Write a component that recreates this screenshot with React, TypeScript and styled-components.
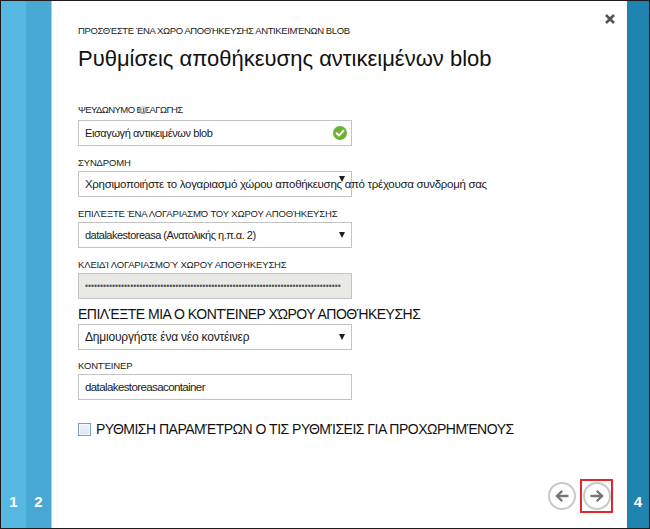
import React from "react";
import styled, { createGlobalStyle } from "styled-components";

const Global = createGlobalStyle`
  html, body { margin: 0; padding: 0; background: #ffffff; }
  body { font-family: "Liberation Sans", Arial, sans-serif; }
  * { box-sizing: border-box; }
`;

const Frame = styled.div`
  width: 650px;
  height: 529px;
  border: 1px solid #1b1b1b;
  display: flex;
  overflow: hidden;
`;

const tones: Record<string, string> = {
  light: "#56b8e1",
  mid: "#47a8d3",
  dark: "#1f84b0",
};

const StepCol = styled.div<{ $tone: string; $w: number }>`
  width: ${(p) => p.$w}px;
  flex: none;
  background: ${(p) => tones[p.$tone]};
  display: flex;
  flex-direction: column;
  justify-content: flex-end;
  align-items: center;
  padding-bottom: 18px;
  color: #ffffff;
  font-family: "Liberation Sans", Arial, sans-serif;
  font-weight: bold;
  font-size: 15px;
`;

const Divider = styled.div`
  width: 1px;
  flex: none;
  background: #9bd6ee;
`;

const Panel = styled.div`
  flex: 1;
  position: relative;
  background: #ffffff;
  display: flex;
  flex-direction: column;
  padding: 24px 14px 15px 26px;
`;

const Close = styled.button`
  position: absolute;
  top: 12px;
  right: 11px;
  width: 12px;
  height: 12px;
  padding: 0;
  border: none;
  background: none;
  display: flex;
`;

const Subtitle = styled.div`
  font-size: 9.5px;
  line-height: 12px;
  color: #222;
  letter-spacing: -0.4px;
`;

const Title = styled.h1`
  margin: 8px 0 0;
  font-weight: normal;
  font-size: 22px;
  line-height: 28px;
  color: #111;
`;

const Form = styled.div`
  display: flex;
  flex-direction: column;
  width: 274px;
  margin-top: 31px;
`;

const Field = styled.div<{ $top: number }>`
  display: flex;
  flex-direction: column;
  margin-top: ${(p) => p.$top}px;
`;

const Label = styled.div<{ $gap?: number; $ls?: number }>`
  position: relative;
  font-size: 9.5px;
  line-height: 12px;
  color: #222;
  letter-spacing: ${(p) => p.$ls ?? -0.15}px;
  margin-bottom: ${(p) => p.$gap ?? 2}px;
  white-space: nowrap;
`;

const Heading = styled.div`
  font-size: 14px;
  line-height: 16px;
  color: #111;
  letter-spacing: -0.5px;
  margin-bottom: 2px;
  white-space: nowrap;
`;

const Spinner = styled.span`
  position: absolute;
  left: 61px;
  top: 2px;
  width: 8px;
  height: 8px;
  border-radius: 50%;
  border: 2px solid #a0a0a0;
  border-top-color: #d6d6d6;
`;

const Box = styled.div<{ $disabled?: boolean }>`
  position: relative;
  height: 26px;
  border: 1px solid #c3c3c3;
  background: ${(p) => (p.$disabled ? "#e9e9e6" : "#ffffff")};
  display: flex;
  align-items: center;
  padding: 0 6px;
  color: #1a1a1a;
  white-space: nowrap;
`;

const BoxText = styled.span<{ $size?: number; $ls?: number }>`
  font-size: ${(p) => p.$size ?? 12}px;
  letter-spacing: ${(p) => p.$ls ?? -0.2}px;
`;

const Arrow = styled.span<{ $top?: number }>`
  position: absolute;
  right: 6px;
  top: ${(p) => p.$top ?? 9}px;
  width: 0;
  height: 0;
  border-left: 3.5px solid transparent;
  border-right: 3.5px solid transparent;
  border-top: 6px solid #1e1e1e;
`;

const Check = styled.span`
  position: absolute;
  right: 4px;
  top: 5px;
  display: flex;
`;

const Dots = styled.span`
  font-size: 8.6px;
  color: #555;
`;

const CheckRow = styled.label`
  display: flex;
  align-items: center;
  gap: 5px;
  margin-top: 21px;
  font-size: 14px;
  color: #111;
  letter-spacing: -0.5px;
  white-space: nowrap;
`;

const CheckBox = styled.span`
  width: 13px;
  height: 13px;
  border: 1px solid #7a9ecb;
  background: linear-gradient(#eef3fa, #dbe5f2);
  box-shadow: inset 0 0 0 1px #f7f9fc;
  flex: none;
`;

const Footer = styled.div`
  margin-top: auto;
  display: flex;
  justify-content: flex-end;
  align-items: center;
  gap: 2px;
`;

const NavFrame = styled.div<{ $active?: boolean }>`
  width: 33px;
  height: 34px;
  border: 2px solid ${(p) => (p.$active ? "#e2282c" : "transparent")};
  display: flex;
  align-items: center;
  justify-content: center;
`;

const NavCircle = styled.button`
  width: 28px;
  height: 28px;
  border-radius: 50%;
  border: 2px solid #c9c9c9;
  background: #ffffff;
  padding: 0;
  display: flex;
  align-items: center;
  justify-content: center;
`;

const ArrowIcon = ({ dir }: { dir: "left" | "right" }) => (
  <svg width="14" height="12" viewBox="0 0 14 12">
    <g
      fill="none"
      stroke="#757575"
      strokeWidth="2.4"
      strokeLinecap="round"
      strokeLinejoin="round"
      transform={dir === "left" ? "translate(14,0) scale(-1,1)" : undefined}
    >
      <path d="M1.5 6 H12" />
      <path d="M7.5 1.5 L12 6 L7.5 10.5" />
    </g>
  </svg>
);

const dots = "•".repeat(85);

export default function App() {
  return (
    <>
      <Global />
      <Frame>
        <StepCol $tone="light" $w={25}>1</StepCol>
        <StepCol $tone="mid" $w={25}>2</StepCol>
        <Divider />
        <Panel>
          <Close aria-label="close">
            <svg width="12" height="12" viewBox="0 0 12 12">
              <path d="M2 2 L10 10 M10 2 L2 10" stroke="#555" strokeWidth="2.6" />
            </svg>
          </Close>
          <Subtitle>ΠΡΟΣΘΈΣΤΕ ΈΝΑ ΧΩΡΟ ΑΠΟΘΉΚΕΥΣΗΣ ΑΝΤΙΚΕΙΜΈΝΩΝ BLOB</Subtitle>
          <Title>Ρυθμίσεις αποθήκευσης αντικειμένων blob</Title>
          <Form>
            <Field $top={0}>
              <Label $gap={4} $ls={-0.6}>
                ΨΕΥΔΩΝΥΜΟ ΕΙΣΑΓΩΓΗΣ
                <Spinner />
              </Label>
              <Box>
                <BoxText $size={11} $ls={-0.4}>Εισαγωγή αντικειμένων blob</BoxText>
                <Check>
                  <svg width="14" height="14" viewBox="0 0 14 14">
                    <circle cx="7" cy="7" r="7" fill="#6bb32e" />
                    <path d="M3.6 7.2 L6 9.6 L10.4 4.8" fill="none" stroke="#fff" strokeWidth="2" strokeLinecap="round" strokeLinejoin="round" />
                  </svg>
                </Check>
              </Box>
            </Field>
            <Field $top={11}>
              <Label>ΣΥΝΔΡΟΜΗ</Label>
              <Box>
                <BoxText $size={11.5} $ls={-0.3}>Χρησιμοποιήστε το λογαριασμό χώρου αποθήκευσης από τρέχουσα συνδρομή σας</BoxText>
                <Arrow $top={4} />
              </Box>
            </Field>
            <Field $top={11}>
              <Label>ΕΠΙΛΈΞΤΕ ΈΝΑ ΛΟΓΑΡΙΑΣΜΌ ΤΟΥ ΧΩΡΟΥ ΑΠΟΘΉΚΕΥΣΗΣ</Label>
              <Box>
                <BoxText $size={11} $ls={-0.5}>datalakestoreasa (Ανατολικής η.π.α. 2)</BoxText>
                <Arrow />
              </Box>
            </Field>
            <Field $top={11}>
              <Label>ΚΛΕΙΔΊ ΛΟΓΑΡΙΑΣΜΟΎ ΧΩΡΟΥ ΑΠΟΘΉΚΕΥΣΗΣ</Label>
              <Box $disabled>
                <Dots>{dots}</Dots>
              </Box>
            </Field>
            <Field $top={7}>
              <Heading>ΕΠΙΛΈΞΤΕ ΜΙΑ Ο ΚΟΝΤΈΙΝΕΡ ΧΏΡΟΥ ΑΠΟΘΉΚΕΥΣΗΣ</Heading>
              <Box>
                <BoxText>Δημιουργήστε ένα νέο κοντέινερ</BoxText>
                <Arrow />
              </Box>
            </Field>
            <Field $top={10}>
              <Label>ΚΟΝΤΈΙΝΕΡ</Label>
              <Box>
                <BoxText $size={11.5} $ls={-0.6}>datalakestoreasacontainer</BoxText>
              </Box>
            </Field>
          </Form>
          <CheckRow>
            <CheckBox />
            ΡΥΘΜΙΣΗ ΠΑΡΑΜΈΤΡΩΝ Ο ΤΙΣ ΡΥΘΜΊΣΕΙΣ ΓΙΑ ΠΡΟΧΩΡΗΜΈΝΟΥΣ
          </CheckRow>
          <Footer>
            <NavFrame>
              <NavCircle aria-label="back">
                <ArrowIcon dir="left" />
              </NavCircle>
            </NavFrame>
            <NavFrame $active>
              <NavCircle aria-label="next">
                <ArrowIcon dir="right" />
              </NavCircle>
            </NavFrame>
          </Footer>
        </Panel>
        <StepCol $tone="dark" $w={22}>4</StepCol>
      </Frame>
    </>
  );
}
